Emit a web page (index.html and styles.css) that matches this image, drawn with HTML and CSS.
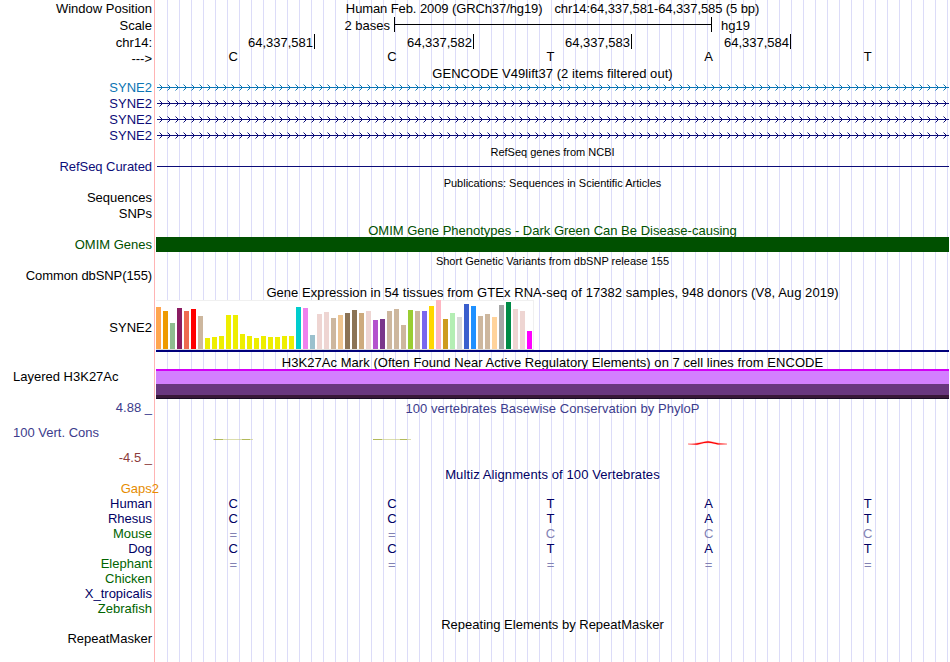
FILE: index.html
```
<!DOCTYPE html>
<html lang="en">
<head>
<meta charset="utf-8">
<title>Genome Browser hg19 chr14:64,337,581-64,337,585</title>
<link rel="stylesheet" href="styles.css">
</head>
<body>
<main class="browser">
  <div class="row h17"><span class="label">Window Position</span><div class="title head"><span>Human Feb. 2009 (GRCh37/hg19)</span><span>chr14:64,337,581-64,337,585 (5 bp)</span></div></div>
  <div class="row h17"><span class="label">Scale</span><div class="scale"><span class="scale-size">2 bases</span><i class="scale-bar"></i><span>hg19</span></div></div>
  <div class="row h16"><span class="label low">chr14:</span><div class="ruler"><span>64,337,581</span><span>64,337,582</span><span>64,337,583</span><span>64,337,584</span></div></div>
  <div class="row h16"><span class="label low">---&gt;</span><div class="bases black"><b>C</b><b>C</b><b>T</b><b>A</b><b>T</b></div></div>
  <div class="row h14"><div class="title low gencode">GENCODE V49lift37 (2 items filtered out)</div></div>
  <div class="row h16 cyan"><span class="label">SYNE2</span><svg class="gene" width="793" height="16"><defs><pattern id="arrow" width="8" height="16" patternUnits="userSpaceOnUse" x="2"><path d="M1 4h1v1h-1zM1 10h1v1h-1z" opacity=".5" fill="#0b75b4"/><path d="M2 5h1v1h-1zM3 6h1v1h-1zM2 9h1v1h-1zM3 8h1v1h-1z" fill="#0b75b4"/></pattern></defs><rect x="1" y="7" width="792" height="1" fill="#0b75b4"/><rect x="1" width="792" height="16" fill="url(#arrow)"/></svg></div>
  <div class="row h16 blue"><span class="label">SYNE2</span><svg class="gene" width="793" height="16"><defs><pattern id="arrow-blue" width="8" height="16" patternUnits="userSpaceOnUse" x="2"><path d="M1 4h1v1h-1zM1 10h1v1h-1z" opacity=".5" fill="#0c0c78"/><path d="M2 5h1v1h-1zM3 6h1v1h-1zM2 9h1v1h-1zM3 8h1v1h-1z" fill="#0c0c78"/></pattern></defs><rect x="1" y="7" width="792" height="1" fill="#0c0c78"/><rect x="1" width="792" height="16" fill="url(#arrow-blue)"/></svg></div>
  <div class="row h16 blue"><span class="label">SYNE2</span><svg class="gene" width="793" height="16"><rect x="1" y="7" width="792" height="1" fill="#0c0c78"/><rect x="1" width="792" height="16" fill="url(#arrow-blue)"/></svg></div>
  <div class="row h16 blue"><span class="label">SYNE2</span><svg class="gene" width="793" height="16"><rect x="1" y="7" width="792" height="1" fill="#0c0c78"/><rect x="1" width="792" height="16" fill="url(#arrow-blue)"/></svg></div>
  <div class="row h15"><div class="title low small">RefSeq genes from NCBI</div></div>
  <div class="row h15 blue"><span class="label refseq">RefSeq Curated</span><i class="refline"></i></div>
  <div class="row h16"><div class="title low small">Publications: Sequences in Scientific Articles</div></div>
  <div class="row h16"><span class="label">Sequences</span></div>
  <div class="row h16"><span class="label">SNPs</span></div>
  <div class="row h15 green"><div class="title low omim">OMIM Gene Phenotypes - Dark Green Can Be Disease-causing</div></div>
  <div class="row h15 green"><span class="label">OMIM Genes</span><i class="omim-bar"></i></div>
  <div class="row h16"><div class="title low small">Short Genetic Variants from dbSNP release 155</div></div>
  <div class="row h16"><span class="label common">Common dbSNP(155)</span></div>
  <div class="row h16"><div class="title low gtex">Gene Expression in 54 tissues from GTEx RNA-seq of 17382 samples, 948 donors (V8, Aug 2019)</div></div>
  <div class="row h52"><span class="label gene-name">SYNE2</span><div class="expression"><div class="bars" id="bars"></div></div></div>
  <div class="row h17"><div class="title h3k">H3K27Ac Mark (Often Found Near Active Regulatory Elements) on 7 cell lines from ENCODE</div></div>
  <div class="row h30 layered"><span class="label start">Layered H3K27Ac</span><i class="mark"></i></div>
  <div class="row h17 phylo"><span class="label">4.88 _</span><div class="title low cons">100 vertebrates Basewise Conservation by PhyloP</div></div>
  <div class="row h34 phylo"><span class="label start">100 Vert. Cons</span><svg width="793" height="34"><path d="M57 23.5H97M217 23.5H255" stroke="#c8cc80" stroke-width="1" opacity=".65"/><path d="M58 23.5H67M86 23.5H94M217 23.5H226M244 23.5H251" stroke="#a2aa38" stroke-width="1" opacity=".7"/><path d="M532 28Q540 27.7 543 26.9L549 25.7Q552 24.9 555 25.7L563 27.4L571 28.1L562 28.4L555 26.9Q552 26.4 548 27L541 28.7Z" fill="#f00" stroke="#f00" stroke-width=".3"/></svg></div>
  <div class="row h16 negative"><span class="label">-4.5 _</span></div>
  <div class="row h16 navy"><div class="title low multiz">Multiz Alignments of 100 Vertebrates</div></div>
  <div class="row h14 orange"><span class="label gaps">Gaps2</span></div>
  <div class="row h15 navy"><span class="label">Human</span><div class="bases"><b>C</b><b>C</b><b>T</b><b>A</b><b>T</b></div></div>
  <div class="row h15 navy"><span class="label">Rhesus</span><div class="bases"><b>C</b><b>C</b><b>T</b><b>A</b><b>T</b></div></div>
  <div class="row h15 leaf"><span class="label">Mouse</span><div class="bases pale"><b class="gap">=</b><b class="gap">=</b><b>C</b><b>C</b><b>C</b></div></div>
  <div class="row h15 navy"><span class="label">Dog</span><div class="bases"><b>C</b><b>C</b><b>T</b><b>A</b><b>T</b></div></div>
  <div class="row h15 leaf"><span class="label">Elephant</span><div class="bases pale"><b class="gap">=</b><b class="gap">=</b><b class="gap">=</b><b class="gap">=</b><b class="gap">=</b></div></div>
  <div class="row h15 leaf"><span class="label">Chicken</span></div>
  <div class="row h15 navy"><span class="label">X_tropicalis</span></div>
  <div class="row h15 leaf"><span class="label">Zebrafish</span></div>
  <div class="row h15"><div class="title low">Repeating Elements by RepeatMasker</div></div>
  <div class="row h15"><span class="label">RepeatMasker</span></div>
</main>
<script src="chart.js"></script>
</body>
</html>
```
FILE: styles.css
```
* { box-sizing: border-box; }
body { margin: 0; background: #fff; }
.browser {
  width: 949px;
  height: 662px;
  overflow: hidden;
  font: 13px/16px "Liberation Sans", Arial, sans-serif;
  color: #000;
  background:
    linear-gradient(#ffb4b4, #ffb4b4) 154px 0 / 1px 100% no-repeat,
    repeating-linear-gradient(90deg, #dcdcf8 0 1px, transparent 1px 12px) 167px 0 / 782px 100% no-repeat;
}
.row { display: grid; grid-template-columns: 156px 793px; grid-template-rows: 100%; align-items: center; white-space: nowrap; }
.row > * { grid-row: 1; min-width: 0; }
.row > :not(.label) { grid-column: 2; }
.label { grid-column: 1; text-align: right; padding-right: 4px; }
.label.start { text-align: left; padding-left: 13px; }
.label.gaps { padding: 0 0 1px; margin-right: -3px; }
.label.common { letter-spacing: -0.1px; }
.label.refseq { letter-spacing: -0.05px; }
.label.gene-name { padding-top: 4px; }
.low { padding-top: 2px; }
.h14 { height: 14px; } .h15 { height: 15px; line-height: 15px; } .h16 { height: 16px; } .h17 { height: 17px; }
.h30 { height: 30px; } .h34 { height: 34px; } .h52 { height: 52px; }
.title { text-align: center; }
.head { display: flex; justify-content: center; gap: 12px; letter-spacing: -0.1px; }
.gencode { letter-spacing: 0.05px; }
.gtex { letter-spacing: 0.055px; }
.h3k { letter-spacing: 0.045px; padding-top: 4px; }
.cons { letter-spacing: 0.04px; }
.multiz { letter-spacing: 0.1px; }
.title.small { font-size: 11px; }
.cyan { color: #0b75b4; }
.blue { color: #0c0c78; }
.green { color: #005000; }
.leaf { color: #006400; }
.navy { color: #000064; }
.orange { color: #e68c00; }
.phylo { color: #3c3c8c; }
.negative { color: #8c3c3c; }
.scale { display: grid; grid-template-columns: 238px 318px auto; align-items: center; margin-top: -2px; }
.scale-size { text-align: right; padding-right: 4px; }
.scale-bar { height: 15px; border: solid #000; border-width: 0 1px; background: linear-gradient(#000, #000) 0 7px / 100% 1px no-repeat; }
.scale span { padding-top: 2px; margin-bottom: -1px; }
.scale-bar + span { padding-left: 9px; }
.ruler { display: grid; grid-template-columns: 159px 159px 158px 159px; text-align: right; height: 16px; }
.ruler span { height: 15px; line-height: 17px; padding-right: 1px; border-right: 1px solid #000; }
.bases { display: grid; grid-template-columns: repeat(5, 1fr); text-align: center; margin-left: -2px; margin-right: 2px; }
.bases b { font-weight: normal; }
.bases b:nth-child(4) { padding-right: 1px; }
.bases .gap { padding-top: 1px; margin-bottom: -1px; }
.bases.black { margin-top: -2px; }
.pale { color: #8282b4; }
.gene { display: block; }
.refline { height: 1px; margin-left: 1px; background: #0c0c78; }
.omim-bar { height: 15px; background: #005000; }
.expression { height: 52px; border-bottom: 2px solid #00007c; }
.bars { width: 378px; height: 50px; display: flex; gap: 2px; align-items: flex-end; background: #fff; border-top: 1px solid #f0f0f0; border-right: 1px solid #f0f0f0; border-bottom: 1px solid #dcdcdc; }
.bars i { width: 5px; flex: none; }
.mark { height: 30px; background: linear-gradient(#d200f5 0 2px, #d37fff 2px 15px, #69377f 15px 26px, #381838 26px 29px, #180c24 29px); }
.layered .label { align-self: start; }
```
FILE: chart.js
```
// Median expression per tissue: [colour, bar height in px]
const tissues = [
  ['#ffa54f', 42], ['#ee9a00', 38], ['#8fbc8f', 26], ['#8b1c62', 41], ['#ee6a50', 38], ['#ff0000', 40], ['#cdb79e', 33],
  ['#eeee00', 11], ['#eeee00', 12], ['#eeee00', 13], ['#eeee00', 34], ['#eeee00', 34], ['#eeee00', 15], ['#eeee00', 13],
  ['#eeee00', 11], ['#eeee00', 13], ['#eeee00', 12], ['#eeee00', 12], ['#eeee00', 13], ['#eeee00', 13],
  ['#00cdcd', 42], ['#ee82ee', 41], ['#9ac0cd', 14], ['#eed5d2', 35], ['#eed5d2', 37], ['#cdb79e', 31], ['#eec591', 34],
  ['#8b7355', 36], ['#8b7355', 39], ['#cdaa7d', 36], ['#eed5d2', 38], ['#b452cd', 29], ['#7a378b', 30], ['#cdb79e', 38],
  ['#cdb79e', 40], ['#cdb79e', 24], ['#9acd32', 39], ['#cdb79e', 38], ['#7a67ee', 38], ['#ffd700', 43], ['#ffb6c1', 49],
  ['#cd9b1d', 30], ['#b4eeb4', 36], ['#d9d9d9', 32], ['#3a5fcd', 45], ['#1e90ff', 43], ['#cdb79e', 33], ['#cdb79e', 35],
  ['#ffd39b', 32], ['#a6a6a6', 44], ['#008b45', 47], ['#eed5d2', 40], ['#eed5d2', 38], ['#ff00ff', 18]
];
const bars = document.getElementById('bars');
for (const [colour, height] of tissues) {
  const bar = document.createElement('i');
  bar.style.background = colour;
  bar.style.height = height + 'px';
  bars.append(bar);
}
```
